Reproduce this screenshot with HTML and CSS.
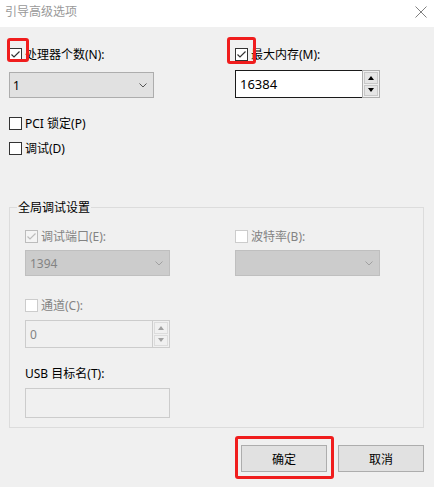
FILE: index.html
```html
<!DOCTYPE html>
<html lang="zh-CN">
<head>
    <meta charset="UTF-8">
    <meta name="viewport" content="width=device-width, initial-scale=1.0">
    <title>引导高级选项</title>
    <link rel="stylesheet" href="styles.css">
</head>
<body>
    <div class="dialog">
        <div class="titlebar">
            <span class="title">引导高级选项</span>
            <svg class="close" width="12" height="12" viewBox="0 0 12 12">
                <path d="M0.5 0.5L11.5 11.5M11.5 0.5L0.5 11.5" stroke="#808080" stroke-width="1" fill="none"/>
            </svg>
        </div>

        <div class="content">
            <div class="top-grid">
                <div class="field">
                    <label class="check-row">
                        <span class="box">
                            <svg width="11" height="11" viewBox="0 0 11 11"><path d="M1.5 5.5L4 8L9.5 2.5" stroke="#333" stroke-width="1.2" fill="none"/></svg>
                        </span>
                        处理器个数(N):
                    </label>
                    <div class="select">
                        <span>1</span>
                        <svg width="8" height="5" viewBox="0 0 8 5"><path d="M0.5 0.5L4 4L7.5 0.5" stroke="#555" fill="none"/></svg>
                    </div>
                </div>
                <div class="field">
                    <label class="check-row">
                        <span class="box">
                            <svg width="11" height="11" viewBox="0 0 11 11"><path d="M1.5 5.5L4 8L9.5 2.5" stroke="#333" stroke-width="1.2" fill="none"/></svg>
                        </span>
                        最大内存(M):
                    </label>
                    <div class="spin">
                        <div class="spin-input">16384</div>
                        <div class="spin-btns">
                            <div class="spin-btn"><span class="tri-up"></span></div>
                            <div class="spin-btn"><span class="tri-down"></span></div>
                        </div>
                    </div>
                </div>
            </div>

            <div class="options">
                <label class="check-row"><span class="box"></span>PCI 锁定(P)</label>
                <label class="check-row"><span class="box"></span>调试(D)</label>
            </div>

            <div class="group">
                <div class="legend">全局调试设置</div>
                <div class="group-grid">
                    <div class="field">
                        <label class="check-row disabled">
                            <span class="box box-disabled">
                                <svg width="11" height="11" viewBox="0 0 11 11"><path d="M1.5 5.5L4 8L9.5 2.5" stroke="#bcbcbc" stroke-width="1.2" fill="none"/></svg>
                            </span>
                            调试端口(E):
                        </label>
                        <div class="select select-disabled">
                            <span>1394</span>
                            <svg width="8" height="5" viewBox="0 0 8 5"><path d="M0.5 0.5L4 4L7.5 0.5" stroke="#a0a0a0" fill="none"/></svg>
                        </div>
                    </div>
                    <div class="field">
                        <label class="check-row disabled"><span class="box box-empty"></span>波特率(B):</label>
                        <div class="select select-disabled">
                            <span></span>
                            <svg width="8" height="5" viewBox="0 0 8 5"><path d="M0.5 0.5L4 4L7.5 0.5" stroke="#a0a0a0" fill="none"/></svg>
                        </div>
                    </div>
                </div>

                <div class="field channel">
                    <label class="check-row disabled"><span class="box box-empty"></span>通道(C):</label>
                    <div class="spin spin-disabled">
                        <div class="spin-input">0</div>
                        <div class="spin-btns">
                            <div class="spin-btn"><span class="tri-up"></span></div>
                            <div class="spin-btn"><span class="tri-down"></span></div>
                        </div>
                    </div>
                </div>

                <div class="field usb">
                    <div class="plain-label">USB 目标名(T):</div>
                    <div class="textbox"></div>
                </div>
            </div>

            <div class="buttons">
                <button class="btn">确定</button>
                <button class="btn">取消</button>
            </div>
        </div>

        <div class="mark mark-cpu"></div>
        <div class="mark mark-mem"></div>
        <div class="mark mark-ok"></div>
    </div>
</body>
</html>
```

FILE: styles.css
```css
body {
    margin: 0;
    font-family: "Noto Sans", "Noto Sans CJK SC", sans-serif;
    font-size: 12px;
    color: #000;
    background: #f0f0f0;
}

.dialog {
    position: relative;
    width: 434px;
    height: 487px;
    background: #f0f0f0;
    overflow: hidden;
}

.titlebar {
    height: 27px;
    background: #ffffff;
    display: flex;
    justify-content: space-between;
    align-items: flex-start;
    padding: 4px 7px 0 5px;
    box-sizing: border-box;
}

.title {
    line-height: 16px;
    color: #999999;
}

.close {
    margin-top: 2px;
}

.content {
    padding: 21px 10px 0 9px;
}

.top-grid {
    display: grid;
    grid-template-columns: 226px 145px;
}

.field {
    display: flex;
    flex-direction: column;
}

.check-row {
    display: flex;
    align-items: center;
    gap: 3px;
    height: 13px;
    line-height: 13px;
    white-space: nowrap;
}

.check-row.disabled {
    color: #838383;
}

.box {
    width: 13px;
    height: 13px;
    box-sizing: border-box;
    border: 1px solid #333333;
    background: #ffffff;
    display: flex;
    align-items: center;
    justify-content: center;
    flex: none;
}

.box-disabled {
    border-color: #bcbcbc;
    background: #f4f4f4;
}

.box-empty {
    border-color: #cccccc;
}

.select {
    margin-top: 11px;
    width: 145px;
    height: 26px;
    box-sizing: border-box;
    border: 1px solid #adadad;
    background: #e1e1e1;
    display: flex;
    align-items: center;
    justify-content: space-between;
    padding: 0 6px 0 3px;
}

.select-disabled {
    margin-top: 7px;
    background: #cccccc;
    border-color: #bfbfbf;
    color: #838383;
    padding-left: 4px;
}

.spin {
    margin-top: 9px;
    width: 145px;
    height: 28px;
    display: flex;
}

.spin-input {
    flex: 1;
    box-sizing: border-box;
    border: 1px solid #1a1a1a;
    border-right: none;
    background: #ffffff;
    padding-left: 4px;
    display: flex;
    align-items: center;
    font-size: 13px;
}

.spin-btns {
    width: 18px;
    box-sizing: border-box;
    border: 1px solid #adadad;
    background: #f0f0f0;
    padding: 1px;
    display: flex;
    flex-direction: column;
    gap: 1px;
}

.spin-btn {
    flex: 1;
    border: 1px solid #c8c8c8;
    background: #e5e5e5;
    display: flex;
    align-items: center;
    justify-content: center;
}

.tri-up {
    width: 0;
    height: 0;
    border-left: 3px solid transparent;
    border-right: 3px solid transparent;
    border-bottom: 4px solid #000;
}

.tri-down {
    width: 0;
    height: 0;
    border-left: 3px solid transparent;
    border-right: 3px solid transparent;
    border-top: 4px solid #000;
}

.spin-disabled .spin-input {
    background: #f0f0f0;
    border-color: #cccccc;
    color: #838383;
    font-size: 12px;
}

.spin-disabled .spin-btns {
    border-color: #cccccc;
}

.spin-disabled .spin-btn {
    background: #f0f0f0;
    border-color: #dcdcdc;
}

.spin-disabled .tri-up {
    border-bottom-color: #a0a0a0;
}

.spin-disabled .tri-down {
    border-top-color: #a0a0a0;
}

.options {
    margin-top: 19px;
    display: flex;
    flex-direction: column;
    gap: 12px;
}

.group {
    margin-top: 52px;
    width: 415px;
    box-sizing: border-box;
    border: 1px solid #dcdcdc;
    padding: 0 15px 9px 15px;
}

.legend {
    margin: -8px 0 0 -8px;
    padding: 0 1px;
    width: fit-content;
    line-height: 16px;
    background: #f0f0f0;
}

.group-grid {
    margin-top: 14px;
    display: grid;
    grid-template-columns: 210px 145px;
}

.channel {
    margin-top: 23px;
}

.channel .spin {
    margin-top: 8px;
}

.usb {
    margin-top: 19px;
}

.plain-label {
    line-height: 13px;
}

.textbox {
    margin-top: 8px;
    width: 145px;
    height: 30px;
    box-sizing: border-box;
    border: 1px solid #cccccc;
    background: #f0f0f0;
}

.buttons {
    margin-top: 17px;
    display: flex;
    justify-content: flex-end;
    gap: 11px;
}

.btn {
    width: 86px;
    height: 27px;
    border: 1px solid #adadad;
    background: #e1e1e1;
    font-family: inherit;
    font-size: 12px;
    color: #000;
    padding: 0;
}

.mark {
    position: absolute;
    box-sizing: border-box;
    border: 3px solid #f01d1d;
    border-radius: 3px;
}

.mark-cpu {
    left: 7px;
    top: 38px;
    width: 22px;
    height: 24px;
}

.mark-mem {
    left: 227px;
    top: 37px;
    width: 29px;
    height: 27px;
}

.mark-ok {
    left: 235px;
    top: 436px;
    width: 99px;
    height: 43px;
}
```
